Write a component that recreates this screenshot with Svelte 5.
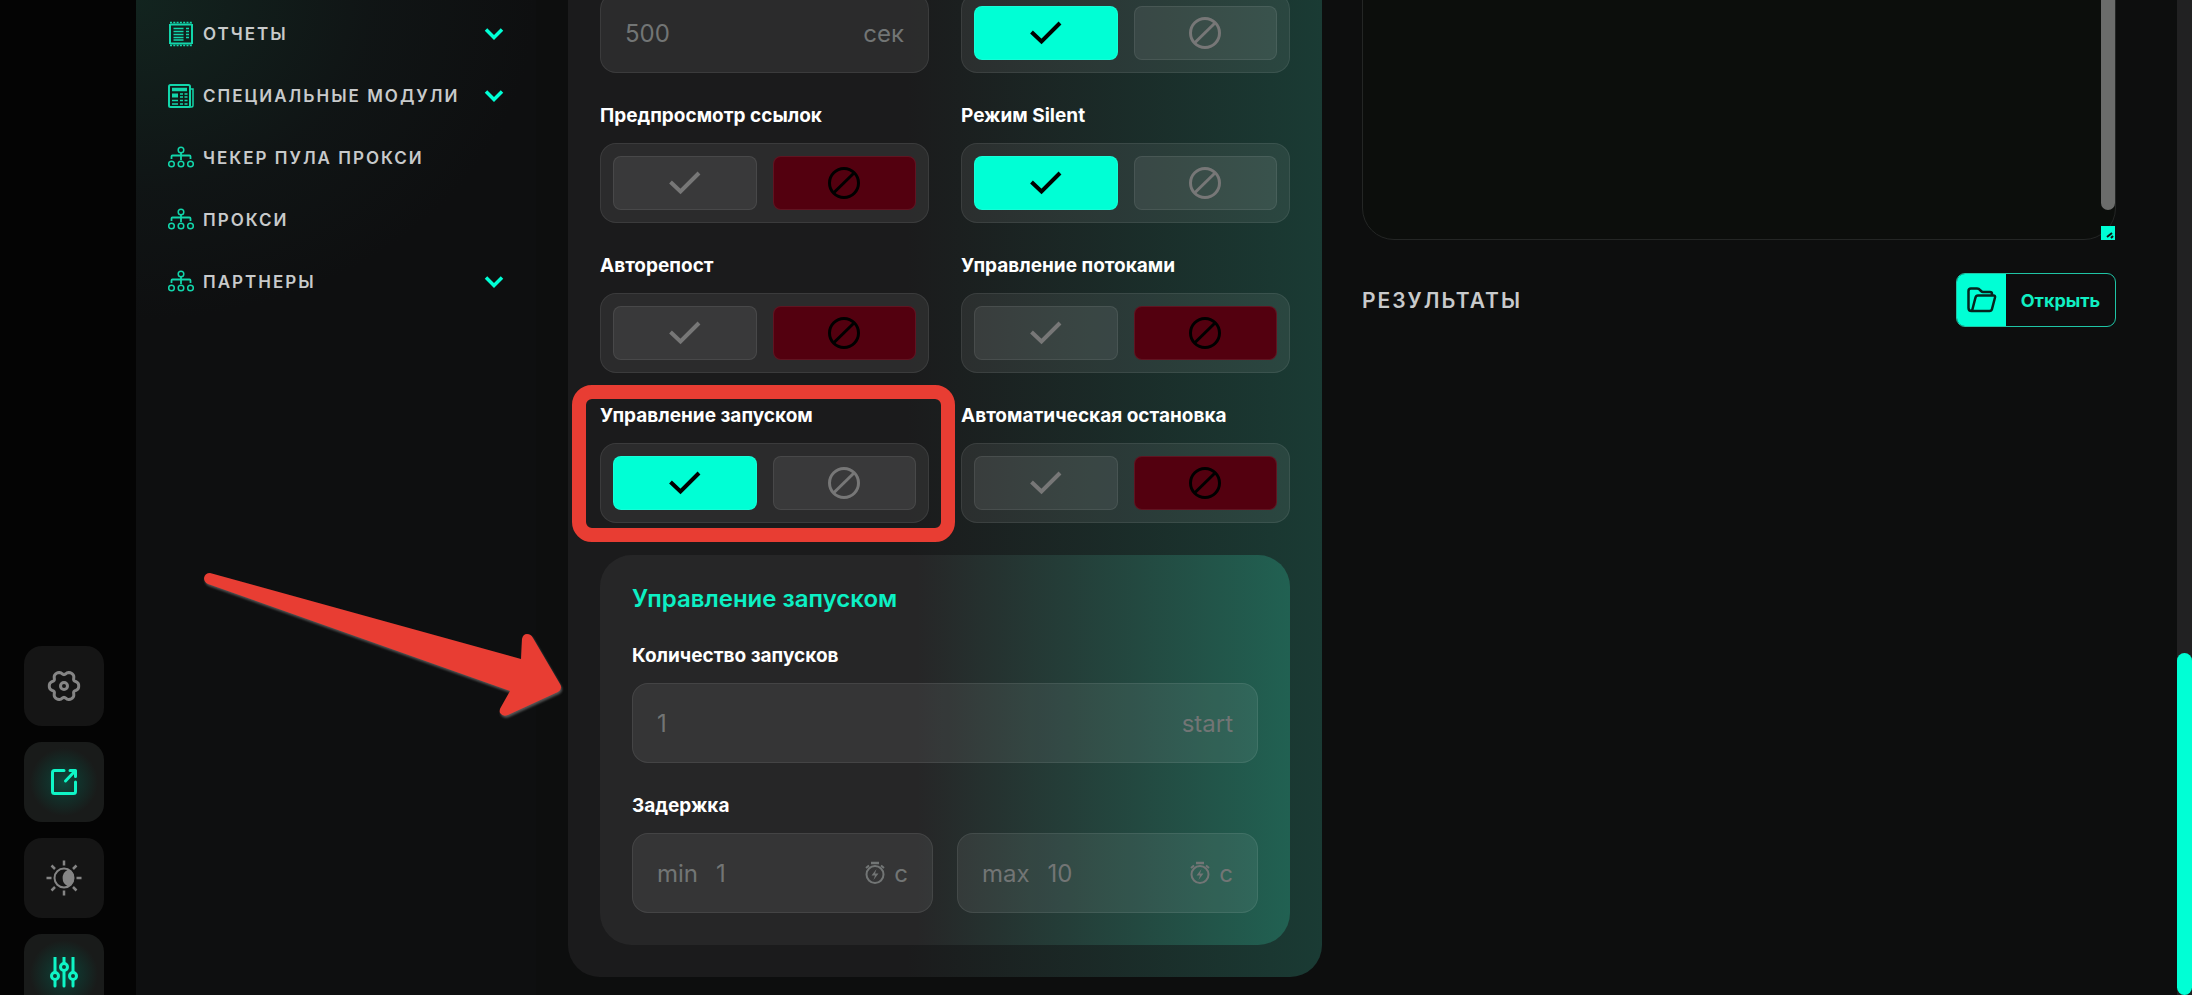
<script lang="ts">
	type Toggle = { id: string; label: string; on: boolean; marked?: boolean };

	const menu = [
		{ label: 'Отчеты', icon: 'report', sub: true },
		{ label: 'Специальные модули', icon: 'news', sub: true },
		{ label: 'Чекер пула прокси', icon: 'tree', sub: false },
		{ label: 'Прокси', icon: 'tree', sub: false },
		{ label: 'Партнеры', icon: 'tree', sub: true }
	];

	let toggles: Toggle[] = $state([
		{ id: 'preview', label: 'Предпросмотр ссылок', on: false },
		{ id: 'silent', label: 'Режим Silent', on: true },
		{ id: 'repost', label: 'Авторепост', on: false },
		{ id: 'threads', label: 'Управление потоками', on: false },
		{ id: 'launch', label: 'Управление запуском', on: true, marked: true },
		{ id: 'autostop', label: 'Автоматическая остановка', on: false }
	]);
	let first: Toggle = $state({ id: 'first', label: '', on: true });

	// six-lobed gear outline around 17,17
	const gear = Array.from({ length: 72 }, (_, i) => {
		const a = (i * Math.PI) / 36;
		const r = 13.4 + 1.7 * Math.cos(6 * a) - 0.4 * Math.cos(12 * a);
		return `${(17 + r * Math.cos(a)).toFixed(2)},${(17 + r * Math.sin(a)).toFixed(2)}`;
	}).join(' ');
</script>

{#snippet menuIcon(name: string)}
	<svg class="menu-icon" viewBox="0 0 26 26" fill="none" stroke="currentColor" stroke-width="1.5">
		{#if name === 'report'}
			<path d="M2 3v20M24 3v20" stroke-width="2" />
			<path d="M2 3.5h22M2 22.5h22" stroke-width="2" />
			<path d="M2 1.500h22M2 24.500h22" stroke-dasharray="2 1.300" />
			<path d="M5.500 7.500h10M5.500 10.500h10M5.500 13.500h10M5.500 16.500h10M5.500 19h10" />
			<path d="M18 7.500h3M18 10.500h3M18 13.500h3M18 16.500h3" />
		{:else if name === 'news'}
			<rect x="1" y="2" width="21" height="22" rx="1.500" stroke-width="2" />
			<path d="M22 6h3v16.500q0 1.500-1.500 1.500H21" />
			<path d="M4 6.500h15" stroke-width="3.500" />
			<path d="M4 12.500h6" stroke-width="4" />
			<path d="M12 11h3M16.500 11h3M12 14h3M16.500 14h3M4 17.500h6M12 17.500h3M16.500 17.500h3M4 21h6M12 21h3M16.500 21h3" />
		{:else}
			<circle cx="13" cy="5" r="2.800" />
			<path d="M13 8v7M3.500 14v-2.500q0-1 1-1h17q1 0 1 1V14" stroke-width="1.800" />
			<circle cx="3.500" cy="19" r="2.800" />
			<circle cx="13" cy="19" r="2.800" />
			<circle cx="22.500" cy="19" r="2.800" />
		{/if}
	</svg>
{/snippet}

{#snippet toggleBox(t: Toggle)}
	<div class="toggle" role="group" aria-label={t.label || undefined}>
		<button class:yes={t.on} aria-label="Да" aria-pressed={t.on} onclick={() => (t.on = true)}>
			<svg width="32" height="24" viewBox="0 0 32 24" fill="none" stroke="currentColor" stroke-width="4">
				<path d="M1.500 11 11.500 20.500 30 2" />
			</svg>
		</button>
		<button class:no={!t.on} aria-label="Нет" aria-pressed={!t.on} onclick={() => (t.on = false)}>
			<svg width="34" height="34" viewBox="0 0 34 34" fill="none" stroke="currentColor" stroke-width="3">
				<circle cx="17" cy="17" r="14.500" />
				<path d="M6.500 27 27.500 6.500" />
			</svg>
		</button>
	</div>
{/snippet}

{#snippet timer()}
	<svg width="22" height="24" viewBox="0 0 22 24" fill="none" stroke="currentColor" stroke-width="2">
		<path d="M7 2h8" stroke-width="2.500" />
		<circle cx="11" cy="13.500" r="8.500" />
		<path d="m2 7 3-2.500M20 7l-3-2.500" />
		<path d="m12.500 8-5 6.500H11L9.500 19l5-6.500H11z" fill="currentColor" stroke="none" />
	</svg>
{/snippet}

<div class="app">
	<nav class="rail" aria-label="Панель">
		<button aria-label="Настройки">
			<svg width="34" height="34" viewBox="0 0 34 34" fill="none" stroke="currentColor" stroke-width="3" stroke-linejoin="round">
				<polygon points={gear} />
				<circle cx="17" cy="17" r="3.500" stroke-width="3" />
			</svg>
		</button>
		<button class="active" aria-label="Открыть в окне">
			<svg width="34" height="34" viewBox="0 0 34 34" fill="none" stroke="currentColor" stroke-width="3" stroke-linecap="round" stroke-linejoin="round">
				<path d="M17 5.500H7.500q-2 0-2 2v19q0 2 2 2h19q2 0 2-2V17" />
				<path d="M18.500 16 28.500 5.500M23 5.500h5.500v6" />
			</svg>
		</button>
		<button aria-label="Тема">
			<svg width="36" height="36" viewBox="0 0 36 36" fill="none" stroke="currentColor" stroke-width="2.500">
				<circle cx="18" cy="18" r="9.500" stroke-width="2" />
				<path d="M22 11a7.500 7.500 0 0 1 0 14 8 8 0 0 1 0-14z" fill="currentColor" />
				<path d="M18 .5v5M18 30.500v5M.5 18h5M30.500 18h5M5.500 5.500 9 9M27 27l3.500 3.500M30.500 5.500 27 9M9 27l-3.500 3.500" />
			</svg>
		</button>
		<button class="active" aria-label="Параметры">
			<svg width="34" height="34" viewBox="0 0 34 34" fill="none" stroke="currentColor" stroke-width="3" stroke-linecap="round">
				<path d="M8 0v15M8 23v6M17 0v6M17 14v15M26 0v15M26 23v6" />
				<circle cx="8" cy="19" r="3.500" />
				<circle cx="17" cy="10" r="3.500" />
				<circle cx="26" cy="19" r="3.500" />
			</svg>
		</button>
	</nav>

	<aside class="sidebar">
		<ul>
			{#each menu as item}
				<li>
					<a href="#menu">
						{@render menuIcon(item.icon)}
						<span>{item.label}</span>
						{#if item.sub}
							<svg class="chevron" width="20" height="14" viewBox="0 0 20 14" fill="none" stroke="currentColor" stroke-width="3.500">
								<path d="m2 2.500 8 8 8-8" />
							</svg>
						{/if}
					</a>
				</li>
			{/each}
		</ul>
	</aside>

	<main>
		<section class="card">
			<div class="grid">
				<label class="input">
					<input placeholder="500" aria-label="Интервал" />
					<span>сек</span>
				</label>
				{@render toggleBox(first)}
				{#each toggles as t (t.id)}
					<div class="field" class:marked={t.marked}>
						<span class="caption">{t.label}</span>
						{@render toggleBox(t)}
					</div>
				{/each}
			</div>

			<div class="panel">
				<h2>Управление запуском</h2>
				<div class="field">
					<label class="caption" for="count">Количество запусков</label>
					<div class="input">
						<input id="count" placeholder="1" />
						<span>start</span>
					</div>
				</div>
				<div class="field">
					<span class="caption">Задержка</span>
					<div class="pair">
						<label class="input">
							<span>min</span>
							<input placeholder="1" />
							{@render timer()}
							<span>с</span>
						</label>
						<label class="input">
							<span>max</span>
							<input placeholder="10" />
							{@render timer()}
							<span>с</span>
						</label>
					</div>
				</div>
			</div>

			<svg class="arrow" width="360" height="148" viewBox="0 0 360 148">
				<path d="M6 0 317 86 318 66Q319 61 323 61 327 61 329 65L356 111Q359 116 354 119L304 142Q299 144 296 140 295 137 297 134L306 118 4 11Q0 9 0 5 1 0 6 0Z" />
			</svg>
		</section>

		<section class="side">
			<div class="log">
				<textarea aria-label="Лог"></textarea>
				<i class="thumb"></i>
				<i class="grip">
					<svg width="14" height="14" viewBox="0 0 14 14" fill="none" stroke="#111" stroke-width="2">
						<path d="m6 11 5-4M10 12l2-2" />
					</svg>
				</i>
			</div>
			<div class="results">
				<h3>Результаты</h3>
				<button class="open">
					<span class="open-icon">
						<svg width="30" height="26" viewBox="0 0 30 26" fill="none" stroke="currentColor" stroke-width="2.500" stroke-linejoin="round" stroke-linecap="round">
							<path d="M25 8V7q0-2-2-2h-7q-1 0-2-1l-1-1q-1-1.500-3-1.500H4q-2.500 0-2.500 2.500v17q0 3 3 3h18q2 0 2.500-2l3-11.500q.5-2-1.500-2H11q-2 0-2.500 2L5 24" />
						</svg>
					</span>
					<span class="open-text">Открыть</span>
				</button>
			</div>
		</section>
	</main>

	<div class="scroll"><i></i></div>
</div>

<style>
	:global(body) {
		background: #0d0e0e;
	}

	.app {
		--accent: #00ffd5;
		--line: rgba(255, 255, 255, 0.08);
		--glass: rgba(255, 255, 255, 0.07);
		display: grid;
		grid-template-columns: 136px 400px minmax(0, 1fr) 15px;
		grid-template-rows: 100vh;
		overflow: hidden;
		color: #fff;
		font-family: Inter, 'Noto Sans', sans-serif;
	}

	button {
		padding: 0;
		border: 0;
		font: inherit;
		cursor: pointer;
	}

	.rail {
		display: flex;
		flex-direction: column;
		justify-content: flex-end;
		gap: 16px;
		padding: 0 24px;
		margin-bottom: -19px;
		background: #040404;
	}

	.rail button {
		display: grid;
		place-items: center;
		flex: none;
		width: 80px;
		height: 80px;
		border-radius: 18px;
		background: #151515;
		color: #858585;
	}

	.rail .active {
		background: radial-gradient(circle, #0d4a3d 0%, #12302a 28%, #191b1a 60%);
		color: #0ff5c6;
	}

	.sidebar {
		background:
			radial-gradient(ellipse 400px 320px at 0 0, #12241f 0%, rgba(17, 24, 24, 0.6) 60%, transparent 100%),
			#0e0f10;
	}

	ul {
		list-style: none;
		margin: 0;
		padding: 3px 32px 0;
	}

	.sidebar a {
		display: flex;
		align-items: center;
		gap: 9px;
		height: 62px;
		color: #c8cacb;
		font-size: 17px;
		font-weight: 600;
		letter-spacing: 2px;
		text-transform: uppercase;
		text-decoration: none;
		white-space: nowrap;
	}

	.menu-icon {
		flex: none;
		width: 26px;
		height: 26px;
		color: #12d6ab;
	}

	.chevron {
		margin-left: auto;
		color: var(--accent);
	}

	main {
		display: grid;
		grid-template-columns: minmax(0, 1fr) minmax(0, 1fr);
		grid-template-rows: 100%;
		gap: 40px;
		padding: 0 61px 0 32px;
	}

	.card {
		position: relative;
		align-self: end;
		padding: 32px;
		margin-bottom: 18px;
		border-radius: 32px;
		background: linear-gradient(90deg, #1b1b1c 45%, #1a3b34);
	}

	.grid {
		display: grid;
		grid-template-columns: minmax(0, 1fr) minmax(0, 1fr);
		gap: 30px 32px;
	}

	.field {
		position: relative;
	}

	.caption {
		display: block;
		margin-bottom: 14px;
		font-size: 19px;
		font-weight: 700;
		line-height: 26px;
		white-space: nowrap;
	}

	.marked::after {
		content: '';
		position: absolute;
		inset: -18px -26px -19px -28px;
		border: 14px solid #e83d33;
		border-radius: 20px;
		pointer-events: none;
	}

	.toggle {
		display: flex;
		gap: 16px;
		padding: 12px;
		border: 1px solid var(--line);
		border-radius: 16px;
		background: var(--glass);
	}

	.toggle button {
		display: grid;
		place-items: center;
		flex: 1;
		height: 54px;
		border: 1px solid var(--line);
		border-radius: 8px;
		background: var(--glass);
		color: #777;
	}

	.toggle .yes {
		background: var(--accent);
		color: #000;
	}

	.toggle .no {
		background: #53000f;
		color: #000;
	}

	.input {
		display: flex;
		align-items: center;
		gap: 8px;
		box-sizing: border-box;
		height: 80px;
		padding: 0 24px;
		border: 1px solid var(--line);
		border-radius: 16px;
		background: var(--glass);
		color: #727575;
		font-size: 24px;
	}

	.input input {
		flex: 1;
		width: 0;
		min-width: 0;
		padding: 0;
		border: 0;
		outline: 0;
		background: none;
		color: inherit;
		font: inherit;
	}

	.input span + input {
		margin-left: 10px;
	}

	.input input::placeholder {
		color: inherit;
		opacity: 1;
	}

	.panel {
		display: flex;
		flex-direction: column;
		gap: 30px;
		margin-top: 32px;
		padding: 30px 32px 32px;
		border-radius: 32px;
		background: linear-gradient(90deg, #262627 46%, #216152);
	}

	h2 {
		margin: 0;
		color: #0cf0c4;
		font-size: 24px;
		font-weight: 600;
		line-height: 28px;
	}

	.pair {
		display: grid;
		grid-template-columns: minmax(0, 1fr) minmax(0, 1fr);
		gap: 24px;
	}

	.arrow {
		position: absolute;
		right: 100%;
		bottom: 256px;
		margin-right: 4px;
		overflow: visible;
		fill: #e83d33;
		filter: drop-shadow(1px 2px 1px #555);
	}

	.log {
		position: relative;
		height: 280px;
		margin-top: -40px;
	}

	textarea {
		display: block;
		box-sizing: border-box;
		width: 100%;
		height: 100%;
		padding: 24px;
		border: 1px solid #242625;
		border-radius: 32px;
		outline: 0;
		background: #0c0e0c;
		color: #c8cacb;
		resize: none;
	}

	.thumb {
		position: absolute;
		top: 0;
		right: 1px;
		bottom: 30px;
		width: 14px;
		border-radius: 7px;
		background: #6b6c6b;
	}

	.grip {
		position: absolute;
		right: 1px;
		bottom: 0;
		width: 14px;
		height: 14px;
		background: var(--accent);
	}

	.grip svg {
		display: block;
	}

	.results {
		display: flex;
		align-items: center;
		justify-content: space-between;
		margin-top: 33px;
	}

	h3 {
		margin: 0;
		color: #c8cacb;
		font-size: 21px;
		font-weight: 600;
		letter-spacing: 2px;
		text-transform: uppercase;
	}

	.open {
		display: flex;
		box-sizing: border-box;
		width: 160px;
		height: 54px;
		overflow: hidden;
		border: 1px solid #1fc4a5;
		border-radius: 9px;
		background: #0d0d0e;
		color: #10efc3;
		font-size: 18px;
		font-weight: 700;
	}

	.open-icon {
		display: grid;
		place-items: center;
		width: 49px;
		height: 100%;
		background: var(--accent);
		color: #06241e;
	}

	.open-text {
		flex: 1;
		align-self: center;
		text-align: center;
	}

	.scroll {
		display: flex;
		align-items: flex-end;
		background: #212122;
	}

	.scroll i {
		width: 100%;
		height: 342px;
		border-radius: 8px;
		background: var(--accent);
	}
</style>
